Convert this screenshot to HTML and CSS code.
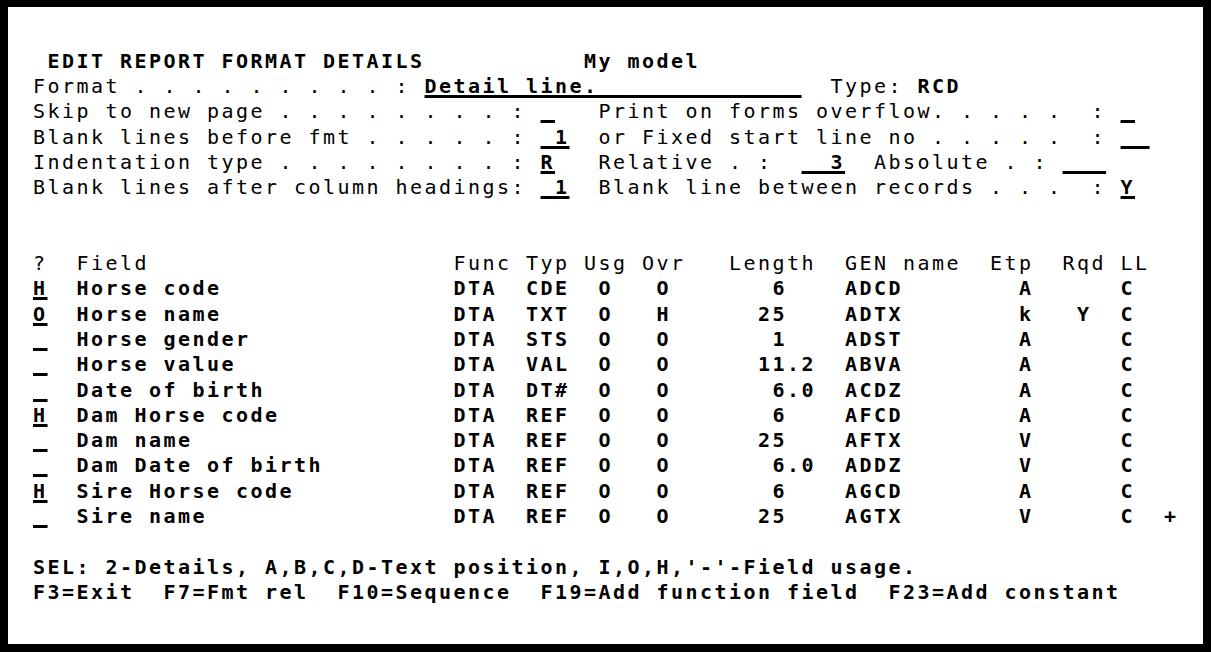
FILE: index.html
```html
<!DOCTYPE html>
<html>
<head>
<meta charset="utf-8">
<title>Edit Report Format Details</title>
<link rel="stylesheet" href="styles.css">
</head>
<body>
<div class="screen">
<div class="row"> </div>
<div class="row">  <span class="hi">EDIT REPORT FORMAT DETAILS</span>           <span class="hi">My model</span></div>
<div class="row"> Format . . . . . . . . . : <span class="fld hi">Detail line.              </span>  Type: <span class="hi">RCD</span></div>
<div class="row"> Skip to new page . . . . . . . . : <span class="fld hi"> </span>   Print on forms overflow. . . . .  : <span class="fld hi"> </span></div>
<div class="row"> Blank lines before fmt . . . . . : <span class="fld hi"> 1</span>  or Fixed start line no . . . . .  : <span class="fld hi">  </span></div>
<div class="row"> Indentation type . . . . . . . . : <span class="fld hi">R</span>   Relative . :  <span class="fld hi">  3</span>  Absolute . : <span class="fld hi">   </span></div>
<div class="row"> Blank lines after column headings: <span class="fld hi"> 1</span>  Blank line between records . . .  : <span class="fld hi">Y</span></div>
<div class="row"> </div>
<div class="row"> </div>
<div class="row"> ?  Field                     Func Typ Usg Ovr   Length  GEN name  Etp  Rqd LL</div>
<div class="row hi"> <span class="fld">H</span>  Horse code                DTA  CDE  O   O       6    ADCD        A      C</div>
<div class="row hi"> <span class="fld">O</span>  Horse name                DTA  TXT  O   H      25    ADTX        k   Y  C</div>
<div class="row hi"> <span class="fld"> </span>  Horse gender              DTA  STS  O   O       1    ADST        A      C</div>
<div class="row hi"> <span class="fld"> </span>  Horse value               DTA  VAL  O   O      11.2  ABVA        A      C</div>
<div class="row hi"> <span class="fld"> </span>  Date of birth             DTA  DT#  O   O       6.0  ACDZ        A      C</div>
<div class="row hi"> <span class="fld">H</span>  Dam Horse code            DTA  REF  O   O       6    AFCD        A      C</div>
<div class="row hi"> <span class="fld"> </span>  Dam name                  DTA  REF  O   O      25    AFTX        V      C</div>
<div class="row hi"> <span class="fld"> </span>  Dam Date of birth         DTA  REF  O   O       6.0  ADDZ        V      C</div>
<div class="row hi"> <span class="fld">H</span>  Sire Horse code           DTA  REF  O   O       6    AGCD        A      C</div>
<div class="row hi"> <span class="fld"> </span>  Sire name                 DTA  REF  O   O      25    AGTX        V      C  +</div>
<div class="row"> </div>
<div class="row hi"> SEL: 2-Details, A,B,C,D-Text position, I,O,H,'-'-Field usage.</div>
<div class="row hi"> F3=Exit  F7=Fmt rel  F10=Sequence  F19=Add function field  F23=Add constant</div>
<div class="row"> </div>
</div>
</body>
</html>
```

FILE: styles.css
```css
html, body {
  margin: 0;
  padding: 0;
  background: #ffffff;
}

.screen {
  width: 1211px;
  height: 652px;
  box-sizing: border-box;
  border: 8px solid #000000;
  border-top-width: 7px;
  padding: 16.4px 0 0 10.5px;
  background: #ffffff;
  color: #000000;
  font-family: "DejaVu Sans Mono", "Liberation Mono", monospace;
  font-size: 20px;
  letter-spacing: 2.459px;
  overflow: hidden;
}

.row {
  height: 25.3px;
  line-height: 25.3px;
  white-space: pre;
}

.hi {
  font-weight: 700;
}

.fld {
  text-decoration: underline;
  text-decoration-thickness: 3px;
  text-underline-offset: 2px;
  text-decoration-skip-ink: none;
}
```
